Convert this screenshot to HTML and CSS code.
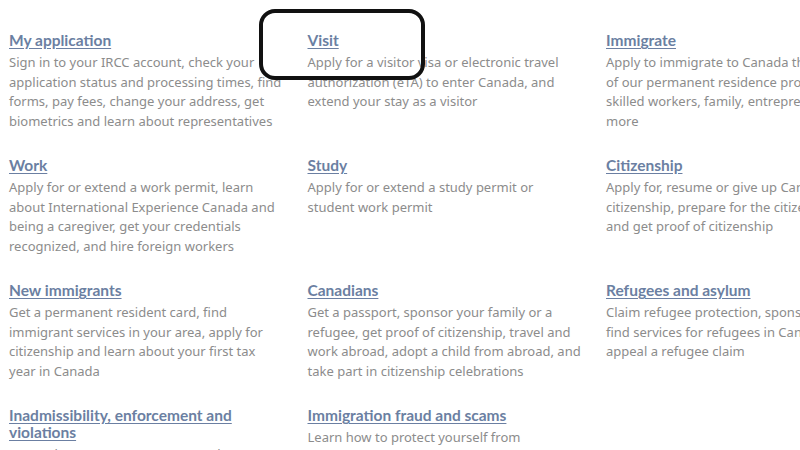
FILE: index.html
```html
<!DOCTYPE html>
<html lang="en">
<head>
    <meta charset="UTF-8">
    <meta name="viewport" content="width=device-width, initial-scale=1.0">
    <title>Immigration and citizenship</title>
    <link rel="stylesheet" href="styles.css">
</head>
<body>
    <div class="services">
        <div class="service">
            <h3><a href="#">My application</a></h3>
            <p>Sign in to your IRCC account, check your application status and processing times, find forms, pay fees, change your address, get biometrics and learn about representatives</p>
        </div>
        <div class="service">
            <h3><a href="#">Visit</a></h3>
            <p>Apply for a visitor visa or electronic travel authorization (eTA) to enter Canada, and extend your stay as a visitor</p>
            <span class="marker"></span>
        </div>
        <div class="service">
            <h3><a href="#">Immigrate</a></h3>
            <p>Apply to immigrate to Canada through one of our permanent residence programs for skilled workers, family, entrepreneurs and more</p>
        </div>

        <div class="service">
            <h3><a href="#">Work</a></h3>
            <p>Apply for or extend a work permit, learn about International Experience Canada and being a caregiver, get your credentials recognized, and hire foreign workers</p>
        </div>
        <div class="service">
            <h3><a href="#">Study</a></h3>
            <p>Apply for or extend a study permit or student work permit</p>
        </div>
        <div class="service">
            <h3><a href="#">Citizenship</a></h3>
            <p>Apply for, resume or give up Canadian citizenship, prepare for the citizenship test and get proof of citizenship</p>
        </div>

        <div class="service">
            <h3><a href="#">New immigrants</a></h3>
            <p>Get a permanent resident card, find immigrant services in your area, apply for citizenship and learn about your first tax year in Canada</p>
        </div>
        <div class="service">
            <h3><a href="#">Canadians</a></h3>
            <p>Get a passport, sponsor your family or a refugee, get proof of citizenship, travel and work abroad, adopt a child from abroad, and take part in citizenship celebrations</p>
        </div>
        <div class="service">
            <h3><a href="#">Refugees and asylum</a></h3>
            <p>Claim refugee protection, sponsor a refugee, find services for refugees in Canada, or appeal a refugee claim</p>
        </div>

        <div class="service">
            <h3><a href="#">Inadmissibility, enforcement and violations</a></h3>
            <p>Learn about reasons you may not be allowed to enter or stay in Canada, and how to report a violation</p>
        </div>
        <div class="service">
            <h3><a href="#">Immigration fraud and scams</a></h3>
            <p>Learn how to protect yourself from immigration fraud and scams</p>
        </div>
    </div>
</body>
</html>
```

FILE: styles.css
```css
body {
    margin: 0;
    padding: 32px 0 0 9px;
    background-color: #fff;
    font-family: "Noto Sans", sans-serif;
    overflow: hidden;
}

.services {
    display: grid;
    grid-template-columns: repeat(3, 274px);
    column-gap: 24.5px;
    row-gap: 26px;
    width: 900px;
}

.service {
    position: relative;
}

.service h3 {
    margin: 0 0 4px;
    font-family: Lato, sans-serif;
    font-size: 15.5px;
    font-weight: bold;
    line-height: 17px;
}

.service h3 a {
    color: #6b7fa2;
    text-decoration: underline;
    text-underline-offset: 2px;
}

.service p {
    margin: 0;
    font-size: 13px;
    line-height: 19.5px;
    color: #8c8c8c;
}

.marker {
    position: absolute;
    left: -49px;
    top: -23px;
    width: 158px;
    height: 63px;
    border: 4px solid #111;
    border-radius: 16px;
}
```
